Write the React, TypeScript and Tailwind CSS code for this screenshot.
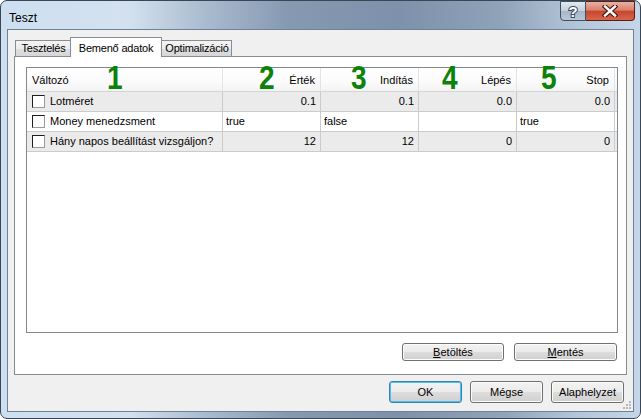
import React from "react";

const rows = [
  { name: "Lotméret", vals: ["0.1", "0.1", "0.0", "0.0"], num: true, grey: true },
  { name: "Money menedzsment", vals: ["true", "false", "", "true"], num: false, grey: false },
  { name: "Hány napos beállítást vizsgáljon?", vals: ["12", "12", "0", "0"], num: true, grey: true },
];

const heads = ["Érték", "Indítás", "Lépés", "Stop"];

const marks = [
  { n: "1", cls: "left-[106px]" },
  { n: "2", cls: "left-[258px]" },
  { n: "3", cls: "left-[350px]" },
  { n: "4", cls: "left-[441px]" },
  { n: "5", cls: "left-[540px]" },
];

function WinButton({ children, def, className }: { children: React.ReactNode; def?: boolean; className: string }) {
  return (
    <div
      className={`${className} rounded-[3px] border flex items-center justify-center text-[11px] text-black bg-[linear-gradient(180deg,#f2f2f2_0%,#ebebeb_50%,#dddddd_51%,#cfcfcf_100%)] ${
        def ? "border-[#3c7fb1] shadow-[inset_0_0_0_1px_#48c0f0]" : "border-[#707070] shadow-[inset_0_0_0_1px_#fcfcfc]"
      }`}
    >
      {children}
    </div>
  );
}

export default function App() {
  return (
    <div className="relative w-[641px] h-[419px] overflow-hidden rounded-[7px] border border-[#3b4654] font-['Liberation_Sans',Arial,sans-serif] bg-[linear-gradient(90deg,#cddff1_0%,#d3e1ef_20%,#a9bbcf_32%,#8599b1_45%,#7d92aa_62%,#8ea2b8_78%,#b3c5d8_90%,#c5d6e8_100%)]">
      {/* title bar */}
      <div className="flex h-[28px] items-start">
        <div className="pl-[8px] pt-[10px] text-[12px] leading-[15px] text-black">Teszt</div>
        <div className="flex-1" />
        <div className="flex mr-[5px]">
          <div className="w-[26px] h-[20px] rounded-bl-[4px] border border-[#3d4f63] bg-[linear-gradient(180deg,#e2e9f1_0%,#c3cfdc_50%,#a6b6c8_51%,#b9c8d8_100%)] flex items-center justify-center">
            <svg width="14" height="16">
              <text x="7" y="14" textAnchor="middle" fontSize="15" fontWeight="bold" fill="#ffffff" stroke="#3b4a5a" strokeWidth="2" paintOrder="stroke" fontFamily="Liberation Sans">?</text>
            </svg>
          </div>
          <div className="w-[49px] h-[20px] rounded-br-[4px] border border-l-0 border-[#5a1d14] bg-[linear-gradient(180deg,#eab0a2_0%,#d9806c_45%,#c6462f_52%,#d8664c_100%)] flex items-center justify-center">
            <svg width="16" height="12" viewBox="0 0 16 12">
              <path d="M3 1.5 L13 10.5 M13 1.5 L3 10.5" stroke="#4a1a12" strokeWidth="4.6" strokeLinecap="square" />
              <path d="M3 1.5 L13 10.5 M13 1.5 L3 10.5" stroke="#ffffff" strokeWidth="2.4" strokeLinecap="square" />
            </svg>
          </div>
        </div>
      </div>

      {/* client area */}
      <div className="relative ml-[6px] w-[627px] h-[383px] border border-[#6d8197] bg-[#f0f0f0] pt-[7px]">
        {/* tabs */}
        <div className="flex items-end h-[19px] pl-[7px] text-[11px] tracking-[-0.2px] text-black">
          <div className="w-[57px] h-[16px] border border-b-0 border-[#898c95] bg-[linear-gradient(180deg,#f4f4f4_0%,#ececec_50%,#dfdfdf_51%,#d6d6d6_100%)] flex items-center justify-center">Tesztelés</div>
          <div className="relative z-10 -ml-[2px] w-[92px] h-[20px] -mb-px border border-b-0 border-[#898c95] bg-white flex items-start pt-[2px] justify-center">Bemenő adatok</div>
          <div className="-ml-[2px] w-[72px] h-[16px] border border-b-0 border-[#898c95] bg-[linear-gradient(180deg,#f4f4f4_0%,#ececec_50%,#dfdfdf_51%,#d6d6d6_100%)] flex items-center justify-center pl-[2px]">Optimalizáció</div>
        </div>

        {/* tab page */}
        <div className="mx-[6px] h-[319px] border border-[#898c95] bg-white pt-[10px] pl-[11px] pr-[9px]">
          <div className="w-[592px] h-[266px] border border-[#828790] bg-white text-[11px] text-black">
            <div className="flex h-[24px] border-b border-[#d5d5d5] bg-[linear-gradient(180deg,#ffffff_0%,#fbfbfb_60%,#f3f3f3_100%)]">
              <div className="w-[196px] border-r border-[#e3e3e3] flex items-center pl-[5px] pt-[2px]">Változó</div>
              {heads.map((h) => (
                <div key={h} className="w-[98px] border-r border-[#e3e3e3] flex items-center justify-end pr-[5px] pt-[2px]">
                  {h}
                </div>
              ))}
            </div>
            {rows.map((r) => (
              <div key={r.name} className={`flex h-[20px] border-b border-[#cbcbcb] ${r.grey ? "bg-[#ebebeb]" : "bg-white"}`}>
                <div className="w-[196px] border-r border-[#cbcbcb] flex items-center pl-[5px] gap-[5px]">
                  <span className="w-[13px] h-[13px] bg-white border border-[#1e1e1e] border-r-[#9a9a9a] border-b-[#9a9a9a]" />
                  <span>{r.name}</span>
                </div>
                {r.vals.map((v, i) => (
                  <div
                    key={i}
                    className={`w-[98px] border-r border-[#cbcbcb] flex items-center ${r.num ? "justify-end pr-[4px]" : "pl-[3px]"}`}
                  >
                    {v}
                  </div>
                ))}
              </div>
            ))}
          </div>
          <div className="mt-[10px] flex justify-end gap-[10px]">
            <WinButton className="w-[102px] h-[18px]">
              <span><span className="underline">B</span>etöltés</span>
            </WinButton>
            <WinButton className="w-[103px] h-[18px]">
              <span><span className="underline">M</span>entés</span>
            </WinButton>
          </div>
        </div>

        {/* dialog buttons */}
        <div className="mt-[6px] flex justify-end gap-[8px] pr-[9px]">
          <WinButton def className="w-[73px] h-[22px]">OK</WinButton>
          <WinButton className="w-[73px] h-[22px]">Mégse</WinButton>
          <WinButton className="w-[73px] h-[22px]">Alaphelyzet</WinButton>
        </div>

        {/* size grip */}
        <svg className="absolute right-[1px] bottom-[1px]" width="10" height="10" viewBox="0 0 10 10">
          {[
            [7, 1],
            [4, 4],
            [7, 4],
            [1, 7],
            [4, 7],
            [7, 7],
          ].map(([x, y]) => (
            <rect key={`${x}-${y}`} x={x} y={y} width="2" height="2" fill="#b8b8b8" />
          ))}
        </svg>
      </div>

      {/* green annotations */}
      {marks.map((m) => (
        <span
          key={m.n}
          className={`absolute top-[60px] ${m.cls} origin-left scale-x-[0.85] text-[33px] leading-none font-bold text-[#0b830b] font-['Liberation_Sans',Arial,sans-serif]`}
        >
          {m.n}
        </span>
      ))}
    </div>
  );
}
